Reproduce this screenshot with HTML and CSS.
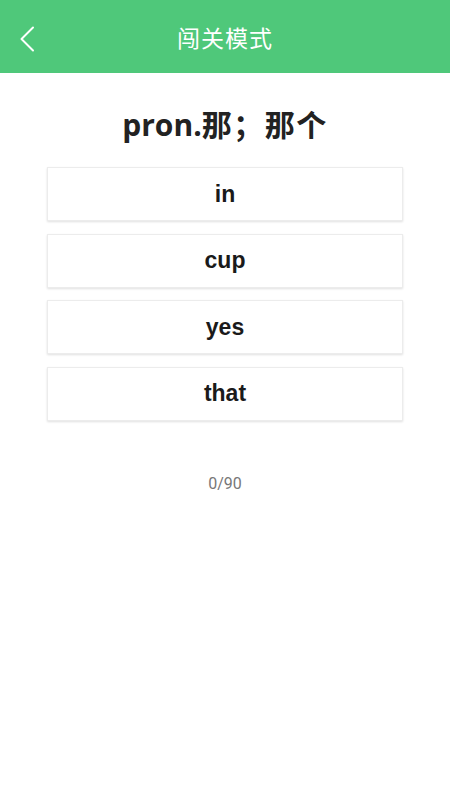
FILE: index.html
```html
<!DOCTYPE html>
<html lang="zh">
<head>
<meta charset="utf-8">
<link rel="stylesheet" href="styles.css">
</head>
<body>
<header class="bar">
  <span class="back"><svg width="16" height="26" viewBox="0 0 16 26"><path d="M14 1.5 L2.5 13 L14 24.5" fill="none" stroke="#fff" stroke-width="2" stroke-linecap="round" stroke-linejoin="round"/></svg></span>
  <h1 class="bar-title">闯关模式</h1>
</header>
<main class="quiz">
  <h2 class="question">pron.<span class="cjk">那；那个</span></h2>
  <ul class="options">
    <li class="option">in</li>
    <li class="option">cup</li>
    <li class="option">yes</li>
    <li class="option">that</li>
  </ul>
  <p class="progress">0/90</p>
</main>
</body>
</html>
```
FILE: styles.css
```css
html, body { margin: 0; padding: 0; background: #fff; }
body { font-family: "Noto Sans CJK SC", "Open Sans", sans-serif; width: 450px; }
.bar {
  height: 73px;
  background: #4fc87a;
  display: flex;
  align-items: center;
  justify-content: center;
  position: relative;
}
.back { position: absolute; left: 19px; top: 26px; width: 16px; height: 26px; display: block; }
.back svg { display: block; }
.bar-title { margin: 0; color: #fff; font-weight: 400; font-size: 23px; letter-spacing: 1px; }
.quiz { display: flex; flex-direction: column; align-items: center; }
.question {
  margin: 28px 0 0;
  height: 44px;
  line-height: 44px;
  font-size: 30px;
  font-weight: 700;
  color: #222;
  font-family: "Open Sans", "Noto Sans CJK SC", sans-serif;
}
.question .cjk { font-family: "Noto Sans CJK SC", sans-serif; letter-spacing: 1.5px; }
.options { list-style: none; margin: 22px 0 0; padding: 0; display: flex; flex-direction: column; gap: 12.5px; }
.option {
  box-sizing: border-box;
  width: 356px;
  height: 54px;
  border: 1px solid #ececec;
  box-shadow: 0 1px 2px rgba(0,0,0,0.12);
  display: flex;
  align-items: center;
  justify-content: center;
  font-family: "Liberation Sans", Arial, sans-serif;
  font-weight: 700;
  font-size: 23px;
  color: #1a1a1a;
  background: #fff;
}
.progress { margin: 53px 0 0; font-family: "Roboto", sans-serif; font-size: 16px; color: #777; }
```
